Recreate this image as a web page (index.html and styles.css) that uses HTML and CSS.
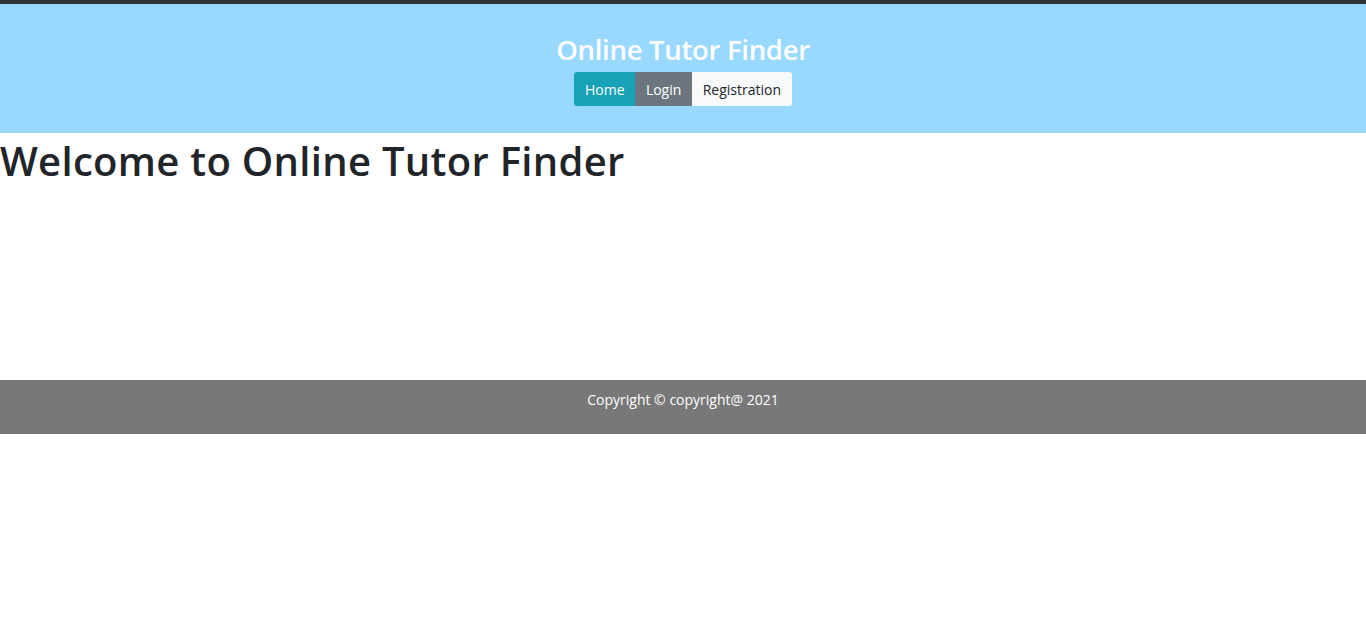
FILE: index.html
```html
<!DOCTYPE html>
<html lang="en">
<head>
<meta charset="utf-8">
<title>Online Tutor Finder</title>
<link rel="stylesheet" href="styles.css">
</head>
<body>
<header class="site-header">
  <h3 class="brand">Online Tutor Finder</h3>
  <nav class="btn-group">
    <a class="btn btn-info" href="#">Home</a>
    <a class="btn btn-secondary" href="#">Login</a>
    <a class="btn btn-light" href="#">Registration</a>
  </nav>
</header>
<main class="content">
  <h1 class="welcome">Welcome to Online Tutor Finder</h1>
</main>
<footer class="site-footer">
  <p class="copy">Copyright © copyright@ 2021</p>
</footer>
</body>
</html>
```

FILE: styles.css
```css
html, body {
  margin: 0;
  padding: 0;
}
body {
  font-family: "Open Sans", "Noto Sans", "Liberation Sans", sans-serif;
  color: #212529;
  background: #fff;
  border-top: 4px solid #303236;
}
.site-header {
  background: #99d8ff;
  height: 129px;
  display: flex;
  flex-direction: column;
  align-items: center;
  padding-top: 28px;
  box-sizing: border-box;
}
.brand {
  margin: 0 0 4px;
  color: #fff;
  font-size: 27.5px;
  font-weight: 600;
  line-height: 36px;
  letter-spacing: -0.3px;
}
.btn-group {
  display: flex;
}
.btn {
  display: block;
  height: 34px;
  line-height: 35px;
  padding: 0 10.7px;
  font-size: 14px;
  text-decoration: none;
  box-sizing: border-box;
}
.btn-info {
  background: #17a2b8;
  color: #fff;
  border-radius: 3px 0 0 3px;
}
.btn-secondary {
  background: #6c757d;
  color: #fff;
}
.btn-light {
  background: #f8f9fa;
  color: #212529;
  border-radius: 0 3px 3px 0;
}
.content {
  height: 247px;
}
.welcome {
  margin: 0;
  font-size: 40px;
  font-weight: 600;
  line-height: 56px;
  letter-spacing: 0.3px;
}
.site-footer {
  background: #787878;
  height: 54px;
  padding-top: 11px;
  box-sizing: border-box;
  text-align: center;
}
.copy {
  margin: 0;
  color: #fff;
  font-size: 14px;
  line-height: 18px;
}
```
